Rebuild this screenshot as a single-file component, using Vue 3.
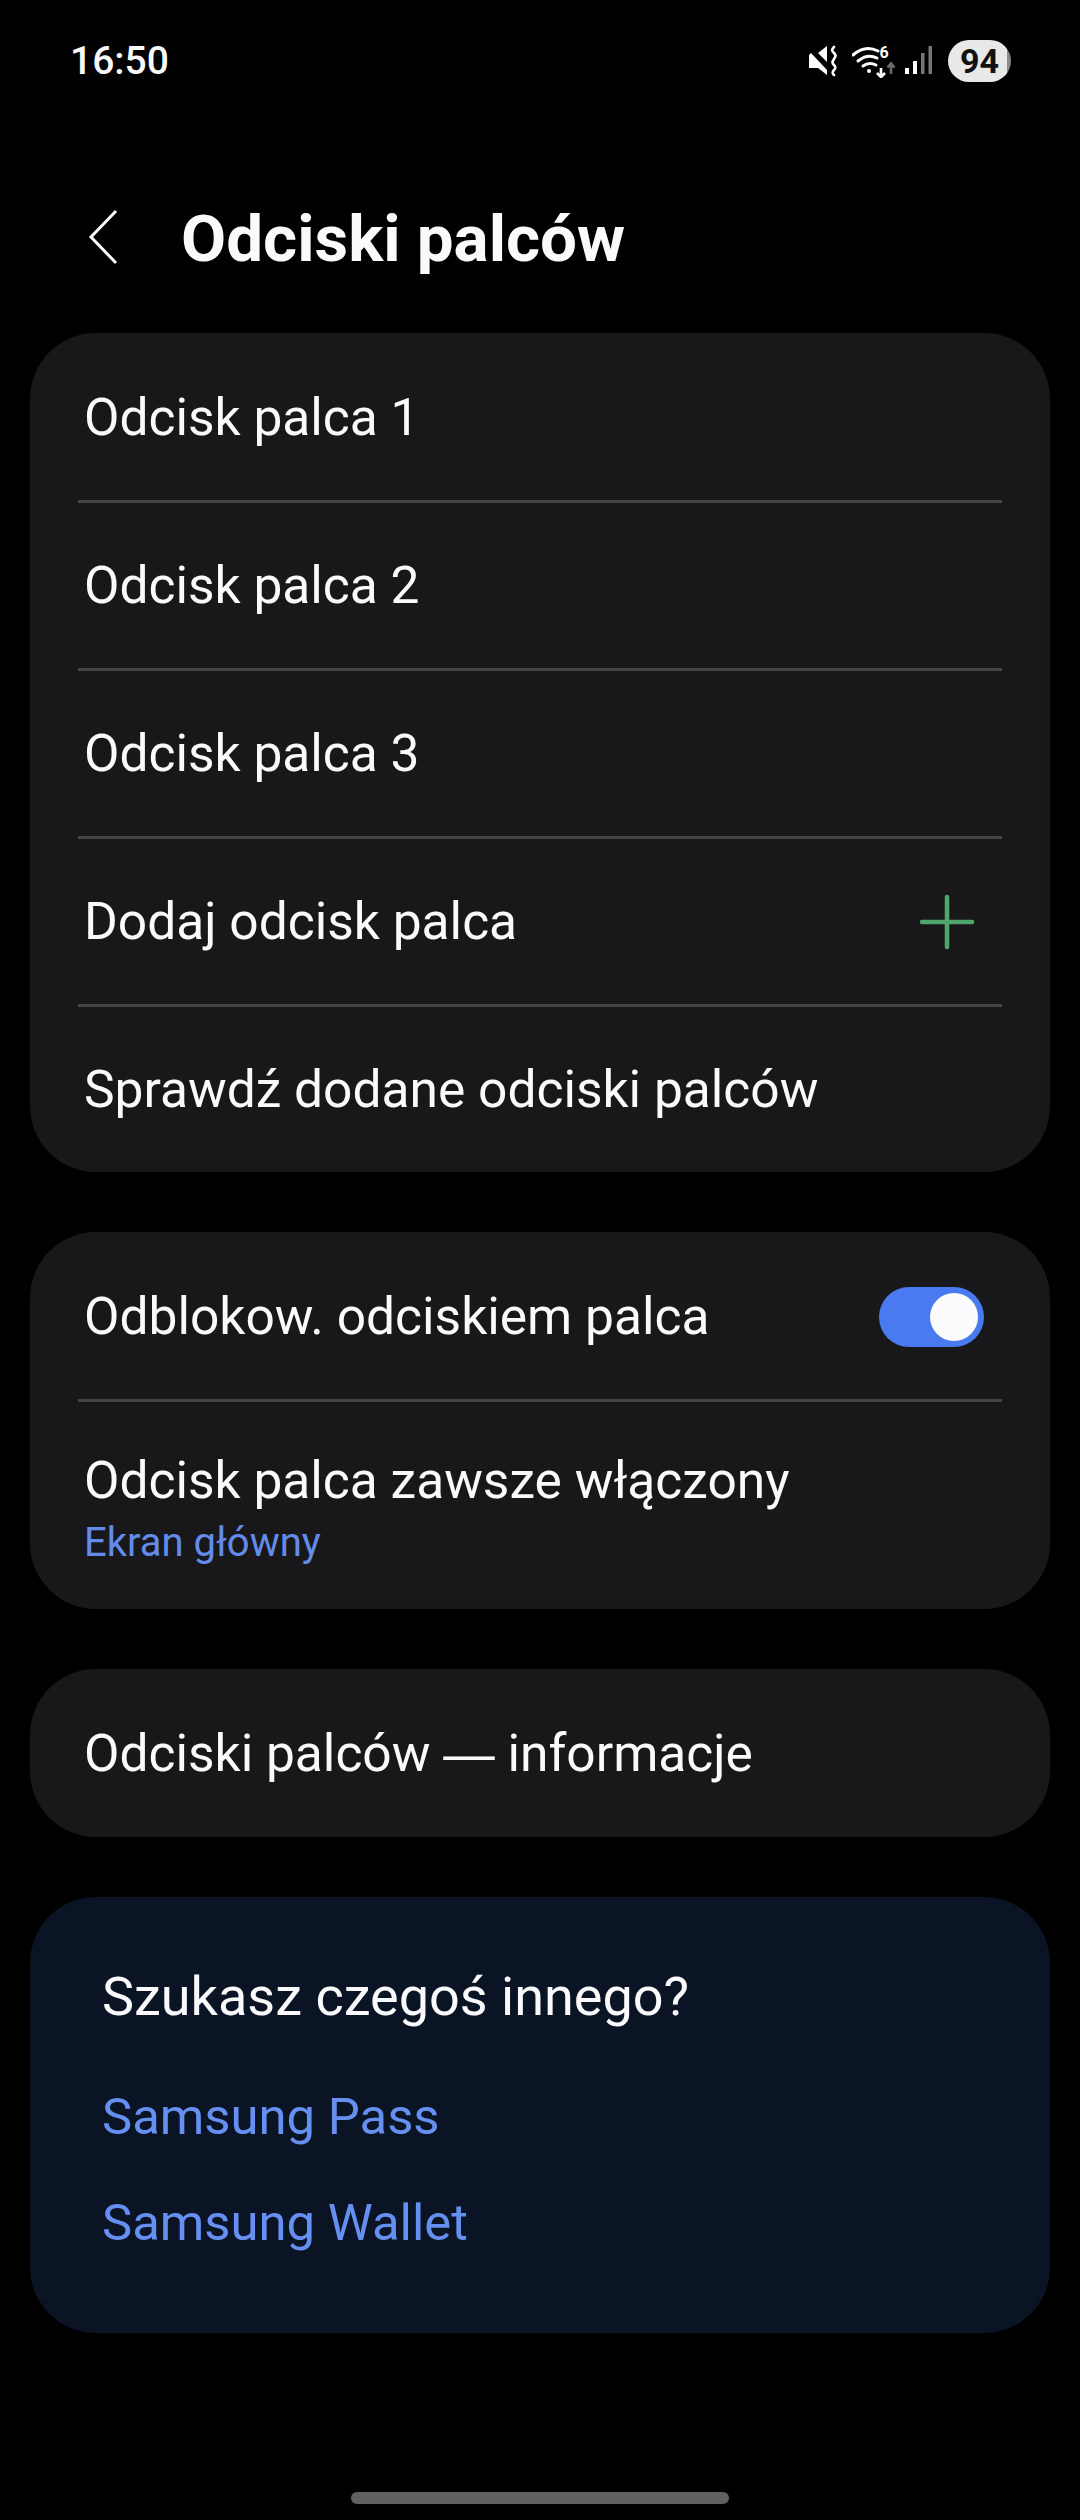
<template>
  <div class="screen">
    <header class="status-bar">
      <span class="clock">16:50</span>
      <div class="status-icons">
        <svg class="icon-mute" width="30" height="34" viewBox="0 0 30 34">
          <path d="M2 11l2-2 16 17v5l-9-7H2z" fill="#fff" />
          <path d="M11 9l9-7v16z" fill="#fff" />
          <path d="M27 3c-3 3-2 4 0 6s2 3 0 6-2 4 0 6 2 3 0 5-2 3 0 5" fill="none" stroke="#fff" stroke-width="2.6" stroke-linecap="round" />
        </svg>
        <svg class="icon-wifi" width="44" height="34" viewBox="0 0 44 34">
          <path d="M1 11C9 4 18 3 26 7" fill="none" stroke="#fff" stroke-width="3" stroke-linecap="round" />
          <path d="M6 17c6-5 13-6 19-3" fill="none" stroke="#fff" stroke-width="3" stroke-linecap="round" />
          <path d="M11 22c4-3 9-3 13-1" fill="none" stroke="#fff" stroke-width="3" stroke-linecap="round" />
          <circle cx="17" cy="27" r="2" fill="#fff" />
          <path d="M29 24v9M25 29l4 4 4-4" fill="none" stroke="#fff" stroke-width="2.6" />
          <path d="M39 30V20M35.500 23.500l3.500-4 3.500 4" fill="none" stroke="#6b6b6b" stroke-width="2.6" />
          <text x="27.500" y="14" class="wifi-six">6</text>
        </svg>
        <svg class="icon-signal" width="28" height="34" viewBox="0 0 28 34">
          <rect x="0" y="24" width="4" height="6" fill="#fff" />
          <rect x="8" y="17" width="4" height="13" fill="#fff" />
          <rect x="16" y="9" width="3.500" height="21" fill="#777" />
          <rect x="23.500" y="2" width="3.500" height="28" fill="#777" />
        </svg>
        <span class="battery">94</span>
      </div>
    </header>

    <div class="title-bar">
      <svg class="back" width="30" height="56" viewBox="0 0 30 56">
        <path d="M28 2L3 28l25 26" fill="none" stroke="#fafafc" stroke-width="3" />
      </svg>
      <h1>Odciski palców</h1>
    </div>

    <section class="card card-list">
      <div v-for="item in fingerprints" :key="item" class="row">
        <span class="row-label">{{ item }}</span>
      </div>
      <div class="row">
        <span class="row-label">Dodaj odcisk palca</span>
        <svg class="plus" width="56" height="56" viewBox="0 0 56 56">
          <path d="M28 3v50M3 28h50" stroke="#4fa66a" stroke-width="4.5" stroke-linecap="round" />
        </svg>
      </div>
      <div class="row row-last">
        <span class="row-label">Sprawdź dodane odciski palców</span>
      </div>
    </section>

    <section class="card card-list">
      <div class="row">
        <span class="row-label">Odblokow. odciskiem palca</span>
        <div class="toggle"><div class="knob"></div></div>
      </div>
      <div class="row row-double">
        <span class="row-label">Odcisk palca zawsze włączony</span>
        <span class="row-sub">Ekran główny</span>
      </div>
    </section>

    <section class="card">
      <div class="row">
        <span class="row-label">Odciski palców <span class="dash">—</span> informacje</span>
      </div>
    </section>

    <section class="card card-suggest">
      <p class="suggest-title">Szukasz czegoś innego?</p>
      <a class="suggest-link">Samsung Pass</a>
      <a class="suggest-link">Samsung Wallet</a>
    </section>

    <div class="home-bar"></div>
  </div>
</template>

<script setup>
const fingerprints = ['Odcisk palca 1', 'Odcisk palca 2', 'Odcisk palca 3']
</script>

<style>
html, body {
  background: #000;
}
</style>

<style scoped>
.screen {
  width: 1080px;
  height: 2520px;
  background: #000;
  font-family: Roboto, "Liberation Sans", sans-serif;
  color: #fafafc;
  display: flex;
  flex-direction: column;
  align-items: center;
  overflow: hidden;
}
.status-bar {
  width: 100%;
  box-sizing: border-box;
  height: 122px;
  padding: 40px 69px 0 70px;
  display: flex;
  justify-content: space-between;
  align-items: flex-start;
}
.clock {
  font-size: 39px;
  line-height: 42px;
  font-weight: 500;
}
.status-icons {
  display: flex;
  align-items: center;
  height: 42px;
}
.icon-mute { margin-right: 15px; }
.icon-signal { margin: 0 15px 0 9px; }
.wifi-six {
  font-family: Roboto, sans-serif;
  font-size: 16px;
  font-weight: 700;
  fill: #fff;
}
.battery {
  width: 63px;
  height: 42px;
  border-radius: 21px;
  background: linear-gradient(to right, #e8e8e8 94%, #8a8a8a 94%);
  color: #111;
  font-size: 34px;
  font-weight: 700;
  line-height: 42px;
  text-align: center;
}
.title-bar {
  width: 100%;
  box-sizing: border-box;
  height: 211px;
  padding: 22px 0 0 88px;
  display: flex;
  align-items: center;
}
.back {
  margin-right: 63px;
  margin-bottom: 4px;
}
h1 {
  margin: 0;
  font-size: 65.5px;
  font-weight: 700;
  color: #fafafc;
}
.card {
  width: 1020px;
  box-sizing: border-box;
  background: #18181a;
  border-radius: 66px;
  margin-bottom: 60px;
  overflow: hidden;
}
.card-list {
  padding-top: 2px;
}
.row {
  height: 168px;
  margin: 0 48px;
  padding: 0 6px;
  border-bottom: 3px solid #444446;
  box-sizing: border-box;
  display: flex;
  align-items: center;
  justify-content: space-between;
}
.row:last-child {
  border-bottom: none;
}
.row-last {
  height: 165px;
}
.row-label {
  font-size: 51.5px;
  font-weight: 400;
  white-space: nowrap;
}
.dash {
  font-family: "Liberation Sans", sans-serif;
}
.row-double {
  height: 207px;
  padding-top: 6px;
  flex-direction: column;
  align-items: flex-start;
  justify-content: center;
}
.row-sub {
  margin-top: 8px;
  font-size: 40px;
  line-height: 48px;
  color: #638cea;
}
.plus { margin-right: 21px; }
.toggle {
  width: 105px;
  height: 60px;
  border-radius: 30px;
  background: #4a7af0;
  margin-right: 12px;
  display: flex;
  align-items: center;
  justify-content: flex-end;
  padding-right: 6px;
  box-sizing: border-box;
}
.knob {
  width: 48px;
  height: 48px;
  border-radius: 50%;
  background: #fcfcff;
}
.card-suggest {
  background: #0a1424;
  height: 436px;
  padding: 65px 72px 0 72px;
  display: flex;
  flex-direction: column;
  margin-bottom: 0;
}
.suggest-title {
  margin: 0 0 50px 0;
  font-size: 54px;
  line-height: 70px;
  color: #fafafc;
}
.suggest-link {
  font-size: 50.8px;
  line-height: 70px;
  margin-bottom: 36px;
  color: #658ff0;
}
.home-bar {
  width: 378px;
  height: 12px;
  border-radius: 6px;
  background: #616161;
  margin-top: 159px;
}
</style>
